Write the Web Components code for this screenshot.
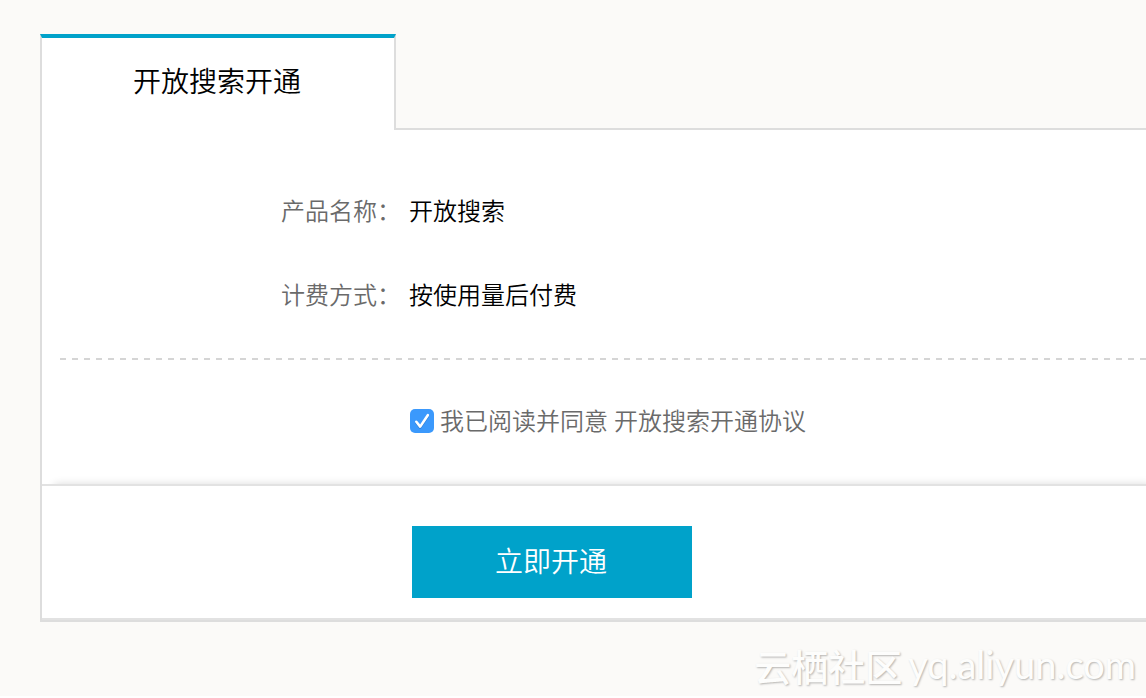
<!DOCTYPE html>
<html lang="zh-CN">
<head>
<meta charset="utf-8">
<title>开放搜索开通</title>
<style>
html { background: #fff; }
body {
  margin: 0;
  background: #fbfaf8;
  color: #000;
  font: 350 24px/36px "Noto Sans CJK SC", sans-serif;
  overflow-x: hidden;
}
</style>
</head>
<body>
<activation-page></activation-page>
<script>
const define = (name, html) => {
  const template = document.createElement('template');
  template.innerHTML = html;
  customElements.define(name, class extends HTMLElement {
    constructor() {
      super();
      this.attachShadow({ mode: 'open' }).append(template.content.cloneNode(true));
    }
  });
};

define('tab-panel', `
<style>
  :host { display: block; }
  header { display: flex; }
  h1 {
    box-sizing: border-box; width: 356px; height: 96px; margin: 0; padding-right: 2px;
    border: solid #ddd; border-width: 4px 2px 0; border-top-color: #00a2ca;
    background: #fff; text-align: center; font-size: 28px; line-height: 84px; font-weight: inherit;
  }
  .rest { flex: 1; border-bottom: 2px solid #ddd; }
  .body { border-left: 2px solid #ddd; border-bottom: 2px solid #ddd; background: #fff; }
</style>
<header><h1><slot name="tab"></slot></h1><div class="rest"></div></header>
<div class="body"><slot></slot></div>`);

define('info-row', `
<style>
  :host { display: flex; height: 84px; align-items: center; gap: 8px; }
  .label { width: 359px; text-align: right; color: #6a6a6a; }
</style>
<span class="label"><slot name="label"></slot></span>
<span><slot></slot></span>`);

define('agree-box', `
<style>
  :host { display: flex; line-height: 32px; padding: 44px 0 48px 368px; color: #6a6a6a; }
  label { display: flex; align-items: center; gap: 6px; }
  .box { display: grid; padding-top: 2px; }
  .box > * { grid-area: 1 / 1; }
  input { appearance: none; width: 24px; height: 24px; margin: 0; border-radius: 5px; background: #3b99fc; }
  svg { display: none; pointer-events: none; }
  input:checked + svg { display: block; }
  a { color: inherit; text-decoration: none; margin-left: 6px; }
</style>
<label for="agree"><span class="box"><input type="checkbox" id="agree" checked>
<svg width="24" height="24" viewBox="0 0 24 24" fill="none" stroke-width="2.6" stroke-linecap="round" stroke-linejoin="round"><path d="M6.3 13.8 10.2 18.6 17.8 7.2" stroke="#2c7ed6"/><path d="M6.3 12.8 10.2 17.6 17.8 6.2" stroke="#fff"/></svg></span><span>我已阅读并同意</span></label>
<a href="#agreement">开放搜索开通协议</a>`);

define('action-bar', `
<style>
  :host {
    display: block; padding: 40px 0 20px 370px;
    border-top: 2px solid #e2e2e2; border-bottom: 2px solid #e2e2e2;
    background: #fff; box-shadow: 8px -4px 8px -4px rgba(0,0,0,.14);
  }
  button {
    display: block; width: 280px; height: 72px; padding: 0 2px 4px 0; border: 0;
    background: #00a2ca; color: #fff; font: inherit; font-size: 28px; cursor: pointer;
  }
</style>
<button type="button"><slot></slot></button>`);

define('site-mark', `
<style>
  :host {
    display: flex; justify-content: flex-end; align-items: center; gap: 6px;
    padding: 20px 10px 6px 0; color: #fdfdfc; font-size: 37px; line-height: 48px;
    text-shadow: 1px 1px 2px rgba(0,0,0,.28);
  }
  .name { font-weight: 500; }
  .host { font-family: Lato, sans-serif; font-size: 38px; font-weight: 400; line-height: 44px; padding-bottom: 4px; }
</style>
<span class="name">云栖社区</span><span class="host">yq.aliyun.com</span>`);

define('activation-page', `
<style>
  :host { display: block; padding-top: 34px; }
  tab-panel { margin-left: 40px; }
  .rows { padding: 38px 0 22px; }
  .dash {
    height: 2px; margin-left: 18px;
    background: repeating-linear-gradient(90deg, #d5d5d5 0 6px, transparent 6px 12px);
  }
</style>
<tab-panel>
  <span slot="tab">开放搜索开通</span>
  <div class="rows">
    <info-row><span slot="label">产品名称：</span>开放搜索</info-row>
    <info-row><span slot="label">计费方式：</span>按使用量后付费</info-row>
  </div>
  <div class="dash"></div>
  <agree-box></agree-box>
  <action-bar>立即开通</action-bar>
</tab-panel>
<site-mark></site-mark>`);
</script>
</body>
</html>
